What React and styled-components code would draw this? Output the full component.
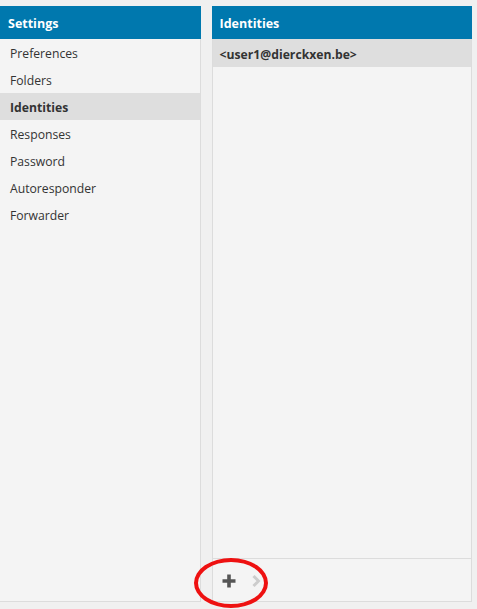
import styled, { createGlobalStyle } from "styled-components";

const GlobalStyle = createGlobalStyle`
  html, body {
    margin: 0;
    padding: 0;
    background: #f0f0f0;
  }
  body {
    font-family: "Open Sans", "Liberation Sans", sans-serif;
    color: #333333;
  }
`;

const Page = styled.div`
  position: relative;
  width: 477px;
  height: 609px;
  box-sizing: border-box;
  padding: 6px 5px 7px 0;
  display: flex;
  gap: 11px;
`;

const Panel = styled.div`
  display: flex;
  flex-direction: column;
  width: ${({ $width }) => $width}px;
  box-sizing: border-box;
  background: #f4f4f4;
  border: 1px solid #dcdcdc;
  border-left-width: ${({ $noLeft }) => ($noLeft ? 0 : 1)}px;
  border-top: none;
`;

const Header = styled.div`
  height: 33px;
  box-sizing: border-box;
  padding-top: 1px;
  display: flex;
  align-items: center;
  padding-left: 8px;
  background: #0078ae;
  color: #ffffff;
  font-weight: 700;
  font-size: 12.5px;
  flex-shrink: 0;
  margin-left: ${({ $noLeft }) => ($noLeft ? 0 : -1)}px;
  margin-right: -1px;
`;

const List = styled.div`
  flex: 1;
  display: flex;
  flex-direction: column;
`;

const Item = styled.div`
  height: 27px;
  box-sizing: border-box;
  padding-top: 2px;
  display: flex;
  align-items: center;
  padding-left: 10px;
  font-size: 12.2px;
  color: #333333;
  font-weight: ${({ $active }) => ($active ? 700 : 400)};
  background: ${({ $active }) => ($active ? "#dedede" : "transparent")};
`;

const IdentityRow = styled(Item)`
  height: 28px;
  padding-left: 7px;
`;

const Footer = styled.div`
  height: 40px;
  flex-shrink: 0;
  border-top: 1px solid #dcdcdc;
  display: flex;
  align-items: center;
  gap: 14px;
  padding-left: 8px;
  padding-top: 2px;
`;

const IconButton = styled.span`
  display: flex;
  align-items: center;
`;

const Annotation = styled.div`
  position: absolute;
  left: 194px;
  top: 558px;
  width: 66px;
  height: 42px;
  border: 4px solid #ee1111;
  border-radius: 50%;
  pointer-events: none;
`;

const settings = [
  "Preferences",
  "Folders",
  "Identities",
  "Responses",
  "Password",
  "Autoresponder",
  "Forwarder",
];

export default function App() {
  return (
    <>
      <GlobalStyle />
      <Page>
        <Panel $width={201} $noLeft>
          <Header $noLeft>Settings</Header>
          <List>
            {settings.map((name) => (
              <Item key={name} $active={name === "Identities"}>
                {name}
              </Item>
            ))}
          </List>
        </Panel>
        <Panel $width={261}>
          <Header>Identities</Header>
          <List>
            <IdentityRow $active>&lt;user1@dierckxen.be&gt;</IdentityRow>
          </List>
          <Footer>
            <IconButton>
              <svg width="16" height="16" viewBox="0 0 16 16">
                <path
                  d="M8 1.5v13M1.5 8h13"
                  stroke="#555555"
                  strokeWidth="3.6"
                  fill="none"
                />
              </svg>
            </IconButton>
            <IconButton>
              <svg width="10" height="14" viewBox="0 0 10 14">
                <path
                  d="M2.5 2l5 5-5 5"
                  stroke="#cccccc"
                  strokeWidth="3"
                  fill="none"
                />
              </svg>
            </IconButton>
          </Footer>
        </Panel>
        <Annotation />
      </Page>
    </>
  );
}
